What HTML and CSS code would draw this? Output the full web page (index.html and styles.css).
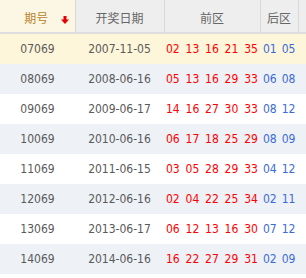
FILE: index.html
```html
<!DOCTYPE html>
<html lang="zh-CN">
<head>
<meta charset="utf-8">
<title>开奖历史</title>
<link rel="stylesheet" href="styles.css">
</head>
<body>
<table class="draws">
  <colgroup>
    <col class="c-issue">
    <col class="c-date">
    <col class="c-front">
    <col class="c-back">
    <col class="c-pad">
  </colgroup>
  <thead>
    <tr>
      <th class="h-issue">期号<svg class="sort" width="8" height="8" viewBox="0 0 8 8"><path d="M2.5 0h3v3.5H8L4 8 0 3.5h2.5z" fill="#e60000"/></svg></th>
      <th>开奖日期</th>
      <th>前区</th>
      <th>后区</th>
      <th class="h-pad"></th>
    </tr>
  </thead>
  <tbody>
    <tr class="sel"><td>07069</td><td>2007-11-05</td><td class="front"><span>02</span><span>13</span><span>16</span><span>21</span><span>35</span></td><td class="back"><span>01</span><span>05</span></td><td></td></tr>
    <tr class="alt"><td>08069</td><td>2008-06-16</td><td class="front"><span>05</span><span>13</span><span>16</span><span>29</span><span>33</span></td><td class="back"><span>06</span><span>08</span></td><td></td></tr>
    <tr><td>09069</td><td>2009-06-17</td><td class="front"><span>14</span><span>16</span><span>27</span><span>30</span><span>33</span></td><td class="back"><span>08</span><span>12</span></td><td></td></tr>
    <tr class="alt"><td>10069</td><td>2010-06-16</td><td class="front"><span>06</span><span>17</span><span>18</span><span>25</span><span>29</span></td><td class="back"><span>08</span><span>09</span></td><td></td></tr>
    <tr><td>11069</td><td>2011-06-15</td><td class="front"><span>03</span><span>05</span><span>28</span><span>29</span><span>33</span></td><td class="back"><span>04</span><span>12</span></td><td></td></tr>
    <tr class="alt"><td>12069</td><td>2012-06-16</td><td class="front"><span>02</span><span>04</span><span>22</span><span>25</span><span>34</span></td><td class="back"><span>02</span><span>11</span></td><td></td></tr>
    <tr><td>13069</td><td>2013-06-17</td><td class="front"><span>06</span><span>12</span><span>13</span><span>16</span><span>30</span></td><td class="back"><span>07</span><span>12</span></td><td></td></tr>
    <tr class="alt"><td>14069</td><td>2014-06-16</td><td class="front"><span>16</span><span>22</span><span>27</span><span>29</span><span>31</span></td><td class="back"><span>02</span><span>09</span></td><td></td></tr>
  </tbody>
</table>
</body>
</html>
```
FILE: styles.css
```css
html, body {
  margin: 0;
  padding: 0;
  background: #ffffff;
}
.draws {
  width: 306px;
  table-layout: fixed;
  border-collapse: collapse;
  border-spacing: 0;
  font-family: "DejaVu Sans Condensed", "DejaVu Sans", "Noto Sans CJK SC", sans-serif;
  font-stretch: condensed;
  font-size: 12px;
  color: #5a5a5a;
}
.c-issue { width: 75px; }
.c-date { width: 89px; }
.c-front { width: 96px; }
.c-back { width: 38px; }
.c-pad { width: 8px; }

.draws th {
  height: 33px;
  box-sizing: border-box;
  padding: 3px 0 0 0;
  background: #eeeeee;
  color: #666666;
  font-family: "Noto Sans CJK SC", sans-serif;
  font-weight: normal;
  font-size: 12px;
  text-align: center;
  border-right: 1px solid #d9d9d9;
  border-bottom: 2px solid #dedede;
}
.draws th.h-issue {
  position: relative;
  background: #fcf6e4;
  color: #b8862e;
  padding-right: 2px;
}
.draws th.h-pad {
  border-right: none;
}
.sort {
  position: absolute;
  left: 61px;
  top: 16px;
}
.draws td {
  height: 30px;
  padding: 0;
  text-align: center;
  white-space: nowrap;
}
.draws tr.sel td { background: #fef6da; }
.draws tr.alt td { background: #eef1f6; }
.draws td.front {
  text-align: left;
  padding-left: 2px;
  color: #ff0000;
}
.draws td.back {
  text-align: left;
  padding-left: 3px;
  color: #3b6bd6;
}
.front span { margin-right: 5.8px; }
.back span { margin-right: 5px; }
.front span:last-child,
.back span:last-child { margin-right: 0; }
```
